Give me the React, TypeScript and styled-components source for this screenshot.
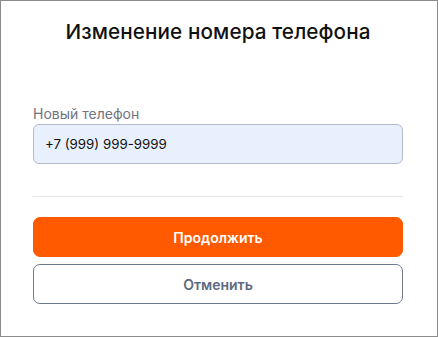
import { useState } from 'react'
import styled, { createGlobalStyle } from 'styled-components'

const GlobalStyle = createGlobalStyle`
  html, body {
    margin: 0;
    padding: 0;
    background: #fff;
  }
  * {
    box-sizing: border-box;
  }
`

const PhoneChangeModal = () => {
  const [phone, setPhone] = useState('+7 (999) 999-9999')

  return (
    <Frame>
      <Title>Изменение номера телефона</Title>
      <Field>
        <Label htmlFor='phone'>Новый телефон</Label>
        <PhoneInput
          id='phone'
          type='tel'
          value={phone}
          onChange={(e) => setPhone(e.target.value)}
        />
      </Field>
      <Divider />
      <Actions>
        <ActionButton variant='primary'>Продолжить</ActionButton>
        <ActionButton variant='outline'>Отменить</ActionButton>
      </Actions>
    </Frame>
  )
}

export default function App() {
  return (
    <>
      <GlobalStyle />
      <PhoneChangeModal />
    </>
  )
}

const Frame = styled.div`
  width: 438px;
  height: 337px;
  border: 1px solid #8c8c8c;
  padding: 17px 34px 0 32px;
  display: flex;
  flex-direction: column;
  background: #fff;
  font-family: Inter, 'Liberation Sans', sans-serif;
`

const Title = styled.h1`
  margin: 0;
  font-size: 20.7px;
  line-height: 28px;
  font-weight: 500;
  color: #111;
  text-align: center;
  letter-spacing: 0.1px;
`

const Field = styled.div`
  display: flex;
  flex-direction: column;
  margin-top: 58px;
`

const Label = styled.label`
  font-size: 14px;
  line-height: 20px;
  color: #6f7480;
`

const PhoneInput = styled.input`
  height: 40px;
  width: 100%;
  padding: 0 11px;
  border: 1px solid #b4bccb;
  border-radius: 6px;
  background: #e8f0fe;
  font-family: inherit;
  font-size: 13.3px;
  color: #111;
  outline: none;
`

const Divider = styled.hr`
  margin: 32px 0 0;
  border: none;
  border-top: 1px solid #e4e6ea;
`

const Actions = styled.div`
  display: flex;
  flex-direction: column;
  gap: 7px;
  margin-top: 20px;
`

const ActionButton = styled.button<{ variant: 'primary' | 'outline' }>`
  height: 40px;
  width: 100%;
  border-radius: 7px;
  font-family: inherit;
  font-size: 14px;
  font-weight: 600;
  cursor: pointer;
  border: 1px solid
    ${(p) => (p.variant === 'primary' ? '#ff5a00' : '#6b7891')};
  background: ${(p) => (p.variant === 'primary' ? '#ff5a00' : '#fff')};
  color: ${(p) => (p.variant === 'primary' ? '#fff' : '#5e6a80')};
`
